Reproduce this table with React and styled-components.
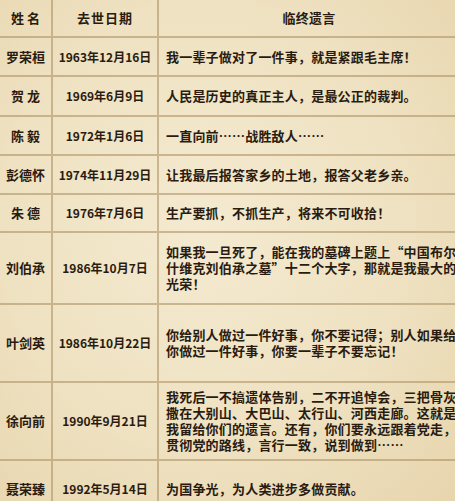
import React from 'react';
import styled, { createGlobalStyle } from 'styled-components';

const rows = [
	{ name: '罗荣桓', date: '1963年12月16日', words: '我一辈子做对了一件事，就是紧跟毛主席！', h: 39 },
	{ name: '贺 龙', date: '1969年6月9日', words: '人民是历史的真正主人，是最公正的裁判。', h: 40 },
	{ name: '陈 毅', date: '1972年1月6日', words: '一直向前……战胜敌人……', h: 39 },
	{ name: '彭德怀', date: '1974年11月29日', words: '让我最后报答家乡的土地，报答父老乡亲。', h: 39 },
	{ name: '朱 德', date: '1976年7月6日', words: '生产要抓，不抓生产，将来不可收拾！', h: 38 },
	{
		name: '刘伯承',
		date: '1986年10月7日',
		words: '如果我一旦死了，能在我的墓碑上题上“中国布尔什维克刘伯承之墓”十二个大字，那就是我最大的光荣！',
		h: 72,
	},
	{
		name: '叶剑英',
		date: '1986年10月22日',
		words: '你给别人做过一件好事，你不要记得；别人如果给你做过一件好事，你要一辈子不要忘记！',
		h: 78,
	},
	{
		name: '徐向前',
		date: '1990年9月21日',
		words: '我死后一不搞遗体告别，二不开追悼会，三把骨灰撒在大别山、大巴山、太行山、河西走廊。这就是我留给你们的遗言。还有，你们要永远跟着党走，贯彻党的路线，言行一致，说到做到……',
		h: 78,
	},
	{ name: '聂荣臻', date: '1992年5月14日', words: '为国争光，为人类进步多做贡献。', h: 56 },
];

const App = () => {
	return (
		<>
			<GlobalStyle />
			<Paper>
				<Table>
					<Row $h={38}>
						<NameCell $head>姓 名</NameCell>
						<DateCell $head>去世日期</DateCell>
						<WordsCell $head>临终遗言</WordsCell>
					</Row>
					{rows.map((r, i) => (
						<Row key={r.name} $h={r.h} $last={i === rows.length - 1}>
							<NameCell>{r.name}</NameCell>
							<DateCell>{r.date}</DateCell>
							<WordsCell>{r.words}</WordsCell>
						</Row>
					))}
				</Table>
			</Paper>
		</>
	);
};

export default App;

const GlobalStyle = createGlobalStyle`
	html, body {
		margin: 0;
		padding: 0;
		overflow: hidden;
		background: #efe2c3;
	}
`;

const Paper = styled.div`
	width: 455px;
	height: 501px;
	overflow: hidden;
	background: radial-gradient(ellipse at 45% 45%, #f4ead0 0%, #efe2c2 55%, #e7d5ad 100%);
	font-family: 'Noto Sans CJK SC', 'Liberation Serif', serif;
	color: #2a1b10;
`;

const Table = styled.div`
	display: flex;
	flex-direction: column;
	width: 470px;
`;

const Row = styled.div`
	display: grid;
	grid-template-columns: 53px 106px 1fr;
	height: ${(p) => p.$h}px;
	border-bottom: ${(p) => (p.$last ? 'none' : '2px solid rgba(170, 140, 95, 0.55)')};
	box-sizing: border-box;
`;

const Cell = styled.div`
	display: flex;
	align-items: center;
	font-size: 13px;
	font-weight: 700;
	line-height: 16px;
	border-right: 2px solid rgba(170, 140, 95, 0.55);
	box-sizing: border-box;
	white-space: nowrap;
`;

const NameCell = styled(Cell)`
	justify-content: center;
	white-space: pre;
	letter-spacing: ${(p) => (p.$head ? '0' : '0')};
`;

const DateCell = styled(Cell)`
	justify-content: center;
	font-size: ${(p) => (p.$head ? '13px' : '12px')};
	letter-spacing: ${(p) => (p.$head ? '1px' : '0')};
`;

const WordsCell = styled(Cell)`
	border-right: none;
	padding: 0 10px 0 7px;
	white-space: normal;
	justify-content: ${(p) => (p.$head ? 'center' : 'flex-start')};
	padding-right: ${(p) => (p.$head ? '18px' : '10px')};
	letter-spacing: 0.2px;
`;
